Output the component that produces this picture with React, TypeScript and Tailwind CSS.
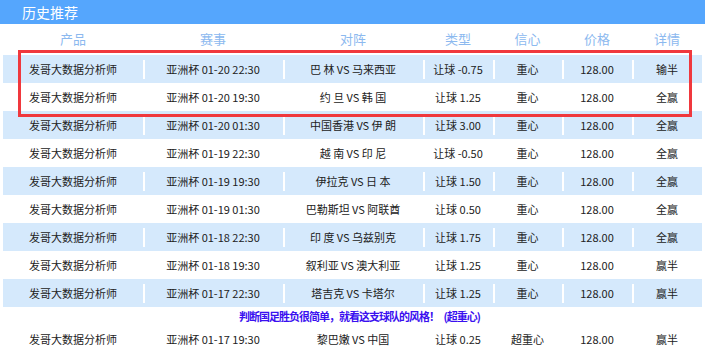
import React from 'react';

const rows = [
  { match: '亚洲杯 01-20 22:30', vs: '巴 林 VS 马来西亚', type: '让球 -0.75', conf: '重心', result: '输半' },
  { match: '亚洲杯 01-20 19:30', vs: '约 旦 VS 韩 国', type: '让球 1.25', conf: '重心', result: '全赢' },
  { match: '亚洲杯 01-20 01:30', vs: '中国香港 VS 伊 朗', type: '让球 3.00', conf: '重心', result: '全赢' },
  { match: '亚洲杯 01-19 22:30', vs: '越 南 VS 印 尼', type: '让球 -0.50', conf: '重心', result: '全赢' },
  { match: '亚洲杯 01-19 19:30', vs: '伊拉克 VS 日 本', type: '让球 1.50', conf: '重心', result: '全赢' },
  { match: '亚洲杯 01-19 01:30', vs: '巴勒斯坦 VS 阿联酋', type: '让球 0.50', conf: '重心', result: '全赢' },
  { match: '亚洲杯 01-18 22:30', vs: '印 度 VS 乌兹别克', type: '让球 1.75', conf: '重心', result: '全赢' },
  { match: '亚洲杯 01-18 19:30', vs: '叙利亚 VS 澳大利亚', type: '让球 1.25', conf: '重心', result: '赢半' },
  { match: '亚洲杯 01-17 22:30', vs: '塔吉克 VS 卡塔尔', type: '让球 1.25', conf: '重心', result: '赢半' },
];

const lastRow = { match: '亚洲杯 01-17 19:30', vs: '黎巴嫩 VS 中国', type: '让球 0.25', conf: '超重心', result: '赢半' };

const cols = 'grid grid-cols-[140px_140px_140px_70px_69px_70px_70px]';
const sep = "relative before:absolute before:left-0 before:top-[5px] before:bottom-[4px] before:w-[2px] before:bg-white before:content-['']";

function Row({ r, blue }: { r: typeof lastRow; blue: boolean }) {
  const cells = ['发哥大数据分析师', r.match, r.vs, r.type, r.conf, '128.00', r.result];
  return (
    <div className={`${cols} h-[28px] ${blue ? 'bg-[#d5e9fc]' : 'bg-white'}`}>
      {cells.map((c, i) => (
        <div key={i} className={`flex items-center justify-center ${i > 0 ? sep : ''}`}>
          {c}
        </div>
      ))}
    </div>
  );
}

export default function App() {
  return (
    <div
      className="relative w-[705px] h-[349px] overflow-hidden bg-white text-[11px] text-[#222]"
      style={{ fontFamily: '"Noto Sans CJK SC", "Noto Sans", sans-serif' }}
    >
      <div className="h-[24px] bg-[#55a6fd] text-white text-[14px] flex items-center pl-[22px]">历史推荐</div>

      <div className="px-[3px]">
        <div className={`${cols} h-[31px] text-[13px] text-[#8cb9ef] pb-[2px]`}>
          {['产品', '赛事', '对阵', '类型', '信心', '价格', '详情'].map(h => (
            <div key={h} className="flex items-center justify-center">{h}</div>
          ))}
        </div>

        {rows.map((r, i) => (
          <Row key={i} r={r} blue={i % 2 === 0} />
        ))}

        <div className="h-[18px] flex items-center justify-center pl-[14px] text-[11px] tracking-[-1px] font-semibold text-[#3a10f0]">
          判断国足胜负很简单，就看这支球队的风格！&nbsp;&nbsp;&nbsp;(超重心)
        </div>

        <Row r={lastRow} blue={false} />
      </div>

      {/* highlight box */}
      <div className="absolute left-[18px] top-[50px] w-[674px] h-[67px] border-[3px] border-[#f0383d] pointer-events-none" />
    </div>
  );
}
